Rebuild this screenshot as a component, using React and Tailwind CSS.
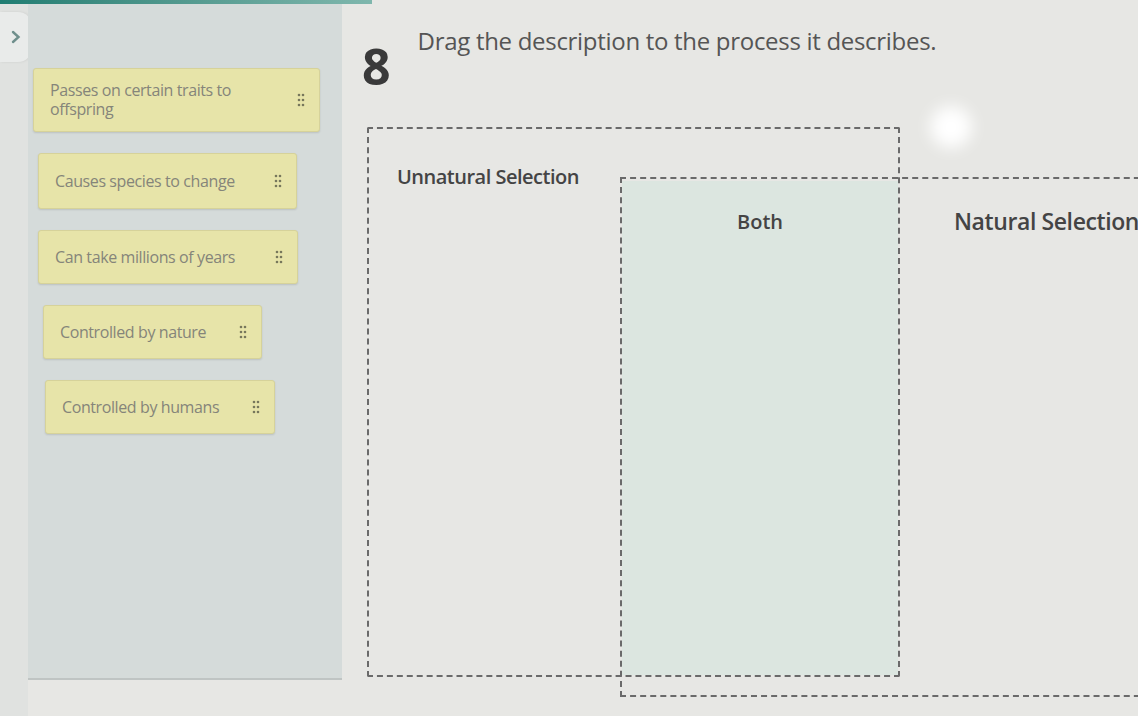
import React from 'react';

const Grip = () => (
  <svg width="8" height="14" viewBox="0 0 8 14" className="shrink-0 text-[#77775c]">
    {[2, 7, 12].map((y) => (
      <g key={y}>
        <circle cx="2" cy={y} r="1.3" fill="currentColor" />
        <circle cx="6" cy={y} r="1.3" fill="currentColor" />
      </g>
    ))}
  </svg>
);

const Card = ({ text, className, textWidth }) => (
  <div
    className={`flex items-center justify-between rounded-[3px] border border-[#d6d29a] bg-[#e7e4a9] pl-[16px] pr-[14px] shadow-[0_1px_2px_rgba(0,0,0,0.12)] ${className}`}
  >
    <p className={`text-[16px] leading-[19px] tracking-[-0.4px] text-[#85857a] ${textWidth}`}>{text}</p>
    <Grip />
  </div>
);

export default function App() {
  return (
    <div
      className="relative flex h-[716px] w-full flex-col overflow-hidden bg-[#e7e7e4]"
      style={{ fontFamily: '"Open Sans", Lato, sans-serif' }}
    >
      {/* top accent bar */}
      <div className="h-[4px] w-[372px] bg-gradient-to-r from-[#1f7d72] to-[#7fb7ad]" />

      <div className="flex flex-1">
        {/* left strip with collapse tab */}
        <div className="flex w-[28px] shrink-0 flex-col bg-[#e0e2e0]">
          <div className="mt-[8px] flex h-[50px] w-[32px] items-center justify-center rounded-r-[14px] bg-[#e9ebea] shadow-[1px_0_3px_rgba(0,0,0,0.08)]">
            <svg width="10" height="14" viewBox="0 0 10 14" className="text-[#6f8f8c]">
              <path d="M2 2 L7.5 7 L2 12" fill="none" stroke="currentColor" strokeWidth="2.4" strokeLinecap="round" />
            </svg>
          </div>
        </div>

        {/* description bank */}
        <div className="flex w-[314px] shrink-0 flex-col">
          <div className="flex h-[676px] flex-col items-start gap-[21px] border-b-2 border-[#bfc4c3] bg-[#d5dbda] pt-[64px]">
            <Card
              text="Passes on certain traits to offspring"
              className="ml-[5px] h-[64px] w-[287px]"
              textWidth="w-[215px]"
            />
            <Card text="Causes species to change" className="ml-[10px] h-[56px] w-[259px]" />
            <Card text="Can take millions of years" className="ml-[10px] h-[54px] w-[260px]" />
            <Card text="Controlled by nature" className="ml-[15px] h-[54px] w-[219px]" />
            <Card text="Controlled by humans" className="ml-[17px] h-[54px] w-[230px]" />
          </div>
        </div>

        {/* question area */}
        <div className="flex min-w-0 flex-1 flex-col">
          <div className="flex items-start pl-[20px] pt-[22px]">
            <span className="mt-[20px] text-[50px] font-bold leading-[40px] text-[#3a3a3a]">8</span>
            <p className="ml-[27px] whitespace-nowrap text-[24px] leading-[30px] tracking-[-0.3px] text-[#555]">
              Drag the description to the process it describes.
            </p>
          </div>

          <div className="ml-[25px] mt-[41px] grid grid-cols-[253px_280px_260px] grid-rows-[52px_498px_20px]">
            {/* Unnatural selection zone */}
            <div className="col-start-1 col-end-3 row-start-1 row-end-3 rounded-[2px] border-2 border-dashed border-[#6a6a6a] pl-[28px] pt-[33px]">
              <span className="text-[20px] font-semibold tracking-[-0.5px] text-[#444]">Unnatural Selection</span>
            </div>
            {/* Natural selection zone */}
            <div className="col-start-2 col-end-4 row-start-2 row-end-4 -mt-[2px] border-2 border-dashed border-[#6a6a6a]" />
            {/* overlap */}
            <div className="col-start-2 col-end-3 row-start-2 row-end-3 m-[2px] flex justify-center bg-[#dce6e0] pt-[26px]">
              <span className="text-[20px] font-semibold text-[#444]">Both</span>
            </div>
            <div className="col-start-3 col-end-4 row-start-2 row-end-3 whitespace-nowrap pl-[54px] pt-[25px]">
              <span className="text-[23px] font-semibold tracking-[-0.4px] text-[#444]">Natural Selection</span>
            </div>
          </div>
        </div>
      </div>

      {/* screen glare */}
      <div className="pointer-events-none absolute left-[930px] top-[106px] h-[42px] w-[42px] rounded-full bg-white blur-[8px]" />
    </div>
  );
}
